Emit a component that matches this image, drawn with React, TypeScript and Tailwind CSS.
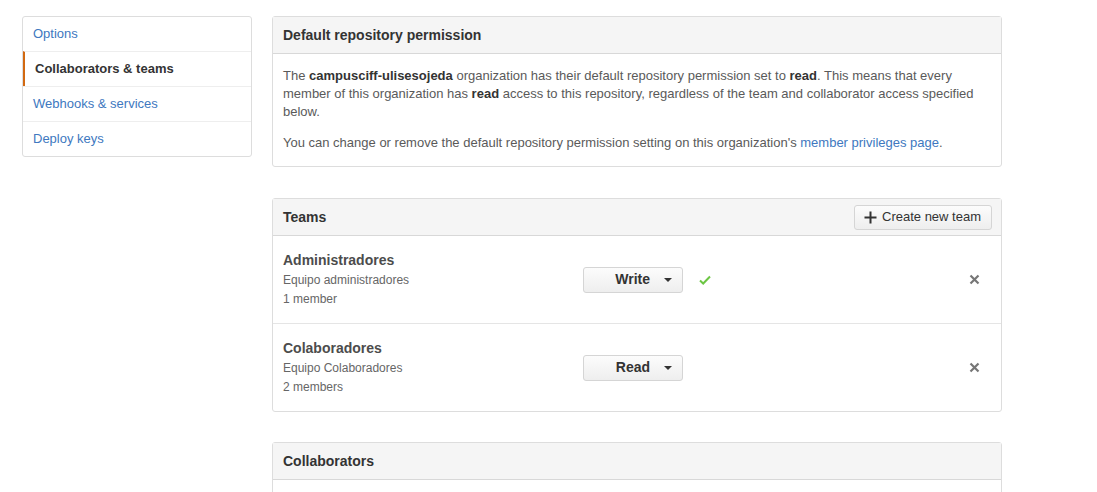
import React from 'react';

const font = { fontFamily: '"Liberation Sans", Arial, Helvetica, sans-serif' };

interface Team {
  name: string;
  description: string;
  members: string;
  permission: string;
  saved?: boolean;
}

const teams: Team[] = [
  { name: 'Administradores', description: 'Equipo administradores', members: '1 member', permission: 'Write', saved: true },
  { name: 'Colaboradores', description: 'Equipo Colaboradores', members: '2 members', permission: 'Read' },
];

const menuItems = ['Options', 'Collaborators & teams', 'Webhooks & services', 'Deploy keys'];

function Caret() {
  return (
    <svg width="8" height="4" viewBox="0 0 8 4" className="ml-[14px]">
      <path d="M0 0h8L4 4z" fill="#333" />
    </svg>
  );
}

function TeamRow({ team, last }: { team: Team; last: boolean }) {
  return (
    <div className={`flex items-center px-[10px] pt-[14px] pb-[14px] ${last ? '' : 'border-b border-[#e5e5e5]'}`}>
      <div className="w-[300px]">
        <div className="text-[14px] leading-[21px] font-bold text-[#4c4c4c]">{team.name}</div>
        <div className="text-[12px] leading-[19px] text-[#666]">{team.description}</div>
        <div className="text-[12px] leading-[19px] text-[#666]">{team.members}</div>
      </div>
      <button className="flex items-center justify-end w-[100px] h-[26px] pr-[10px] rounded-[3px] border border-[#d5d5d5] bg-gradient-to-b from-[#fcfcfc] to-[#eeeeee] text-[14px] font-bold text-[#333]">
        <span>{team.permission}</span>
        <Caret />
      </button>
      <div className="w-[28px] flex justify-end">
        {team.saved && (
          <svg width="12" height="10" viewBox="0 0 12 10">
            <path d="M1 5.5l3.2 3L11 1.5" fill="none" stroke="#6cc644" strokeWidth="2" />
          </svg>
        )}
      </div>
      <div className="flex-1" />
      <svg width="11" height="11" viewBox="0 0 11 11" className="mr-[11px]">
        <path d="M1.5 1.5l8 8M9.5 1.5l-8 8" stroke="#767676" strokeWidth="2.2" />
      </svg>
    </div>
  );
}

export default function App() {
  return (
    <div style={font} className="min-h-screen bg-white text-[13px] text-[#5a5a5a] flex gap-[20px] pl-[22px] pt-[16px]">
      {/* Sidebar menu */}
      <div className="w-[230px] self-start border border-[#dddddd] rounded-[3px] bg-white">
        {menuItems.map((item, idx) => {
          const active = item === 'Collaborators & teams';
          return (
            <div
              key={item}
              className={`flex items-center pl-[10px] ${idx > 0 ? 'h-[35px] border-t border-[#eeeeee]' : 'h-[34px]'} ${
                active ? 'font-bold text-[#333] border-l-2 border-l-[#d26911] pl-[8px]' : 'text-[#4078c0]'
              }`}
            >
              {item}
            </div>
          );
        })}
      </div>

      {/* Main column */}
      <div className="w-[730px] flex flex-col">
        <div className="border border-[#dddddd] rounded-[3px]">
          <div className="h-[37px] flex items-center px-[10px] bg-[#f5f5f5] border-b border-[#d8d8d8] text-[14px] font-bold text-[#333]">
            Default repository permission
          </div>
          <div className="px-[10px] pt-[13px] pb-[14px] leading-[18px]">
            <p>
              The <b className="text-[#333]">campusciff-ulisesojeda</b> organization has their default repository permission set to{' '}
              <b className="text-[#333]">read</b>. This means that every member of this organization has{' '}
              <b className="text-[#333]">read</b> access to this repository, regardless of the team and collaborator access specified
              below.
            </p>
            <p className="mt-[13px]">
              You can change or remove the default repository permission setting on this organization's{' '}
              <span className="text-[#4078c0]">member privileges page</span>.
            </p>
          </div>
        </div>

        <div className="mt-[31px] border border-[#dddddd] rounded-[3px]">
          <div className="h-[37px] flex items-center justify-between pl-[10px] pr-[9px] bg-[#f5f5f5] border-b border-[#d8d8d8]">
            <span className="text-[14px] font-bold text-[#333]">Teams</span>
            <button className="flex items-center gap-[5px] h-[25px] pl-[9px] pr-[10px] rounded-[3px] border border-[#d5d5d5] bg-gradient-to-b from-[#fcfcfc] to-[#eeeeee] text-[13px] text-[#333]">
              <svg width="13" height="13" viewBox="0 0 13 13">
                <path d="M6.5 0.5v12M0.5 6.5h12" stroke="#333" strokeWidth="2" />
              </svg>
              Create new team
            </button>
          </div>
          {teams.map((team, idx) => (
            <TeamRow key={team.name} team={team} last={idx === teams.length - 1} />
          ))}
        </div>

        <div className="mt-[30px] border border-[#dddddd] rounded-[3px]">
          <div className="h-[37px] flex items-center px-[10px] bg-[#f5f5f5] border-b border-[#d8d8d8] text-[14px] font-bold text-[#333]">
            Collaborators
          </div>
          <div className="h-[80px]" />
        </div>
      </div>
    </div>
  );
}
